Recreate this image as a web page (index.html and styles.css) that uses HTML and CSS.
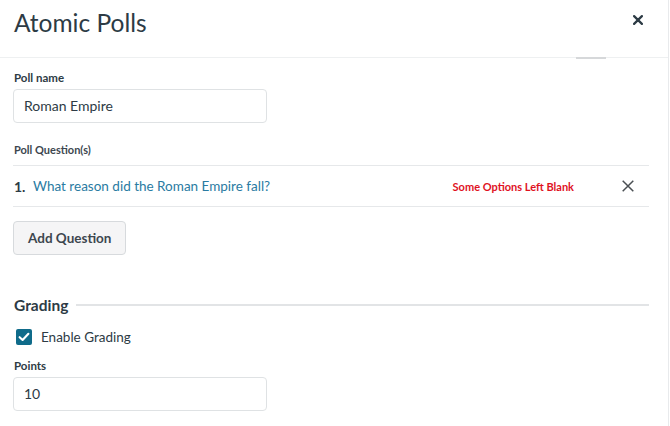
FILE: index.html
```html
<!DOCTYPE html>
<html>
<head>
<meta charset="utf-8">
<link rel="stylesheet" href="styles.css">
</head>
<body>
<div class="modal">
  <header class="header">
    <h1 class="title">Atomic Polls</h1>
    <button class="close" aria-label="Close">
      <svg width="10" height="10" viewBox="0 0 10 10"><path d="M1.1 1.1 L8.9 8.9 M8.9 1.1 L1.1 8.9" stroke="#2d3b45" stroke-width="2.2" stroke-linecap="round"/></svg>
    </button>
    <span class="scroll-tab"></span>
  </header>
  <main class="content">
    <label class="label label-first">Poll name</label>
    <div class="input">Roman Empire</div>

    <div class="label label-q">Poll Question(s)</div>
    <div class="questions">
      <div class="qrow">
        <span class="qnum">1.</span>
        <a class="qlink">What reason did the Roman Empire fall?</a>
        <span class="qwarn">Some Options Left Blank</span>
        <span class="qdel">
          <svg width="12" height="12" viewBox="0 0 12 12"><path d="M0.7 0.7 L11.3 11.3 M11.3 0.7 L0.7 11.3" stroke="#4a4f53" stroke-width="1.5"/></svg>
        </span>
      </div>
    </div>
    <button class="btn">Add Question</button>

    <div class="section-head">
      <span class="section-title">Grading</span>
      <span class="section-line"></span>
    </div>
    <div class="check-row">
      <span class="checkbox">
        <svg width="16" height="16" viewBox="0 0 16 16"><path d="M3.6 8.2 L6.6 11 L12.4 4.8" fill="none" stroke="#fff" stroke-width="2.1" stroke-linecap="round" stroke-linejoin="round"/></svg>
      </span>
      <span class="check-label">Enable Grading</span>
    </div>
    <label class="label label-points">Points</label>
    <div class="input">10</div>
  </main>
</div>
</body>
</html>
```

FILE: styles.css
```css
* { box-sizing: border-box; }
html, body { margin: 0; padding: 0; background: #fff; }
body {
  font-family: Lato, "Open Sans", "Liberation Sans", sans-serif;
  color: #2d3b45;
}
.modal {
  width: 669px;
  height: 426px;
  border-right: 1px solid #e8eaec;
  overflow: hidden;
}
.header {
  position: relative;
  height: 58px;
  border-bottom: 1px solid #eef0f1;
  display: flex;
  align-items: flex-start;
  justify-content: space-between;
  padding: 0 25px 0 14px;
}
.title {
  margin: 8px 0 0 0;
  font-size: 24.5px;
  font-weight: 400;
  line-height: 30px;
  color: #2d3b45;
}
.close {
  margin-top: 15px;
  border: 0;
  background: none;
  padding: 0;
  width: 10px;
  height: 10px;
  display: flex;
}
.scroll-tab {
  position: absolute;
  left: 576px;
  bottom: -2px;
  width: 30px;
  height: 2px;
  background: #d6d8da;
}
.content {
  padding: 0 19px 0 13px;
}
.label {
  display: block;
  font-size: 11.5px;
  font-weight: 700;
  line-height: 16px;
  padding-left: 1px;
}
.label-first { margin-top: 12px; }
.label-q {
  font-size: 11px;
  margin-top: 19px;
  color: #3d474f;
}
.label-points { margin-top: 13px; }
.input {
  margin-top: 3px;
  width: 254px;
  height: 34px;
  border: 1px solid #dfe2e4;
  border-radius: 4px;
  padding: 0 10px;
  font-size: 14px;
  line-height: 32px;
  color: #2d3b45;
}
.questions {
  margin-top: 7px;
  border-top: 1px solid #e6e8ea;
  border-bottom: 1px solid #e6e8ea;
}
.qrow {
  height: 40px;
  display: flex;
  align-items: center;
  padding-left: 1px;
}
.qnum {
  font-weight: 700;
  font-size: 14px;
  width: 19px;
}
.qlink {
  font-size: 13.5px;
  color: #2a7ba2;
  flex: 1;
}
.qwarn {
  font-size: 11px;
  font-weight: 700;
  color: #e0121f;
  margin-right: 48px;
}
.qdel {
  display: flex;
  margin-right: 15px;
}
.btn {
  margin-top: 14px;
  height: 34px;
  padding: 0 14px;
  border: 1px solid #d7dadd;
  border-radius: 4px;
  background: #f5f5f6;
  font-family: inherit;
  font-size: 13.5px;
  font-weight: 700;
  color: #3d474f;
}
.section-head {
  margin-top: 40px;
  display: flex;
  align-items: center;
  gap: 8px;
}
.section-title {
  font-size: 15.5px;
  font-weight: 700;
  line-height: 20px;
  padding-left: 1px;
}
.section-line {
  flex: 1;
  height: 2px;
  background: #e2e4e6;
}
.check-row {
  margin-top: 14px;
  display: flex;
  align-items: center;
  padding-left: 3px;
}
.checkbox {
  width: 16px;
  height: 16px;
  border-radius: 2px;
  background: #0f6b8a;
  display: flex;
}
.check-label {
  margin-left: 9px;
  font-size: 13.5px;
}
```
